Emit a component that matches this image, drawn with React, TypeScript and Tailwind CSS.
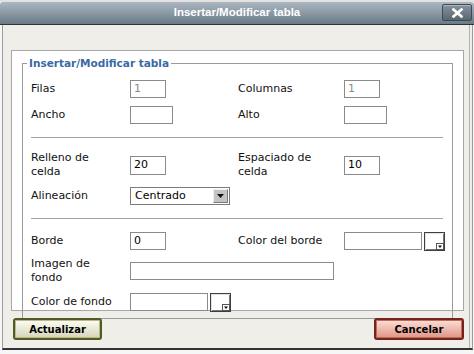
import type { ReactNode } from "react"

const Label = ({ children, className = "w-[99px]" }: { children: ReactNode; className?: string }) => (
  <div className={`${className} shrink-0 leading-[14px] text-[#111]`}>{children}</div>
)

const Field = ({ w, value = "", dim = false, h = "h-[18px]" }: { w: string; value?: string; dim?: boolean; h?: string }) => (
  <div
    className={`${w} ${h} shrink-0 border border-[#8a8a8a] bg-white pl-[3px] leading-[16px] ${dim ? "text-[#8a8a8a]" : "text-black"}`}
  >
    {value}
  </div>
)

const Picker = () => (
  <svg width="21" height="19" viewBox="0 0 21 19" className="ml-[2px] shrink-0">
    <rect x="0.5" y="0.5" width="20" height="18" fill="#ffffff" stroke="#3f3f3f" />
    <rect x="1.5" y="1.5" width="18" height="16" fill="none" stroke="#e2e2e2" />
    <path d="M2 17.5 H19.5 V2" fill="none" stroke="#777777" />
    <rect x="12.5" y="11.5" width="7" height="6" fill="#ffffff" stroke="#555555" />
    <path d="M14 13.5 H18 L16 16 Z" fill="#111" />
  </svg>
)

const Sep = ({ mt }: { mt: string }) => <div className={`${mt} ml-[8px] w-[412px] h-px bg-[#a3a3a3]`} />

export default function App() {
  return (
    <div className="w-[474px] h-[354px] overflow-hidden bg-[#f6f6f6] font-['DejaVu_Sans',Verdana,sans-serif] text-[11px]">
      <div className="h-[2px] bg-[#e2e2e2]" />
      <div className="relative h-[23px] flex items-center justify-center rounded-t-[3px] border-b border-[#2f3438] bg-linear-to-b from-[#abb8c2] to-[#6b7b88]">
        <span className="font-['Liberation_Sans',Arial,sans-serif] font-bold text-[11.5px] text-white">
          Insertar/Modificar tabla
        </span>
        <div className="absolute right-[2px] top-[2px] w-[30px] h-[17px] flex items-center justify-center rounded-[2px] border border-[#3f4a52] bg-linear-to-b from-[#8794a0] to-[#5a6771] shadow-[inset_0_1px_0_#a9b4bd]">
          <svg width="11" height="10" viewBox="0 0 11 10">
            <path d="M1.5 1.5 L9.5 8.5 M9.5 1.5 L1.5 8.5" stroke="#ffffff" strokeWidth="2.6" strokeLinecap="square" />
          </svg>
        </div>
      </div>

      <div className="ml-[2px] w-[471px] h-[325px] flex flex-col border-l border-r border-b-2 border-l-[#9c9c9c] border-r-[#9c9c9c] border-b-[#333333] bg-[#efeee9] shadow-[inset_-2px_0_0_#efeee9,inset_-3px_0_0_#b4b4b4]">
        <div className="mt-[25px] ml-[8px] w-[453px] h-[261px] shrink-0 border border-[#a7a7a7] bg-white">
          <fieldset className="mt-[6px] ml-[10px] w-[431px] h-[262px] border border-[#9a9a9a] flex flex-col">
            <legend className="ml-[4px] px-[2px] leading-[13px] text-[10.5px] font-bold text-[#3a6aa4]">
              Insertar/Modificar tabla
            </legend>

            <div className="mt-[10px] ml-[8px] h-[18px] flex items-center">
              <Label>Filas</Label>
              <div className="w-[108px] shrink-0">
                <Field w="w-[36px]" value="1" dim />
              </div>
              <Label className="w-[106px]">Columnas</Label>
              <Field w="w-[36px]" value="1" dim />
            </div>

            <div className="mt-[8px] ml-[8px] h-[18px] flex items-center">
              <Label>Ancho</Label>
              <div className="w-[108px] shrink-0">
                <Field w="w-[43px]" />
              </div>
              <Label className="w-[106px]">Alto</Label>
              <Field w="w-[43px]" />
            </div>

            <Sep mt="mt-[13px]" />

            <div className="mt-[13px] ml-[8px] h-[28px] flex items-center">
              <Label>
                Relleno de
                <br />
                celda
              </Label>
              <div className="w-[108px] shrink-0">
                <Field w="w-[36px]" h="h-[19px]" value="20" />
              </div>
              <Label className="w-[106px]">
                Espaciado de
                <br />
                celda
              </Label>
              <Field w="w-[36px]" h="h-[19px]" value="10" />
            </div>

            <div className="mt-[8px] ml-[8px] h-[18px] flex items-center">
              <Label>Alineación</Label>
              <div className="w-[100px] h-[18px] flex items-center justify-between border border-[#7b7b7b] bg-white pl-[4px]">
                <span className="leading-[16px]">Centrado</span>
                <div className="mr-px w-[15px] h-[14px] flex items-center justify-center border border-t-[#eeeeee] border-l-[#eeeeee] border-r-[#7a7a7a] border-b-[#7a7a7a] bg-[#c4c4c4]">
                  <svg width="7" height="4" viewBox="0 0 7 4">
                    <path d="M0 0 H7 L3.5 4 Z" fill="#111" />
                  </svg>
                </div>
              </div>
            </div>

            <Sep mt="mt-[13px]" />

            <div className="mt-[13px] ml-[8px] h-[18px] flex items-center">
              <Label>Borde</Label>
              <div className="w-[108px] shrink-0">
                <Field w="w-[36px]" value="0" />
              </div>
              <Label className="w-[106px]">Color del borde</Label>
              <Field w="w-[78px]" />
              <Picker />
            </div>

            <div className="mt-[7px] ml-[8px] h-[28px] flex items-center">
              <Label>
                Imagen de
                <br />
                fondo
              </Label>
              <Field w="w-[204px]" />
            </div>

            <div className="mt-[8px] ml-[8px] h-[18px] flex items-center">
              <Label>Color de fondo</Label>
              <Field w="w-[78px]" />
              <Picker />
            </div>
          </fieldset>
        </div>

        <div className="relative mt-[7px] pl-[10px] pr-[8px] flex justify-between">
          <button className="w-[89px] h-[22px] rounded-[3px] border-2 border-[#555a22] bg-linear-to-b from-[#fdfdf6] to-[#d6d5b9] shadow-[inset_0_0_0_1px_#b9b98c] text-[10px] font-bold text-black">
            Actualizar
          </button>
          <button className="w-[90px] h-[22px] rounded-[3px] border-2 border-[#74241c] bg-linear-to-b from-[#fbe0d8] to-[#df9485] shadow-[inset_0_0_0_1px_#c06a5c] text-[10px] font-bold text-black">
            Cancelar
          </button>
        </div>
      </div>
    </div>
  )
}
